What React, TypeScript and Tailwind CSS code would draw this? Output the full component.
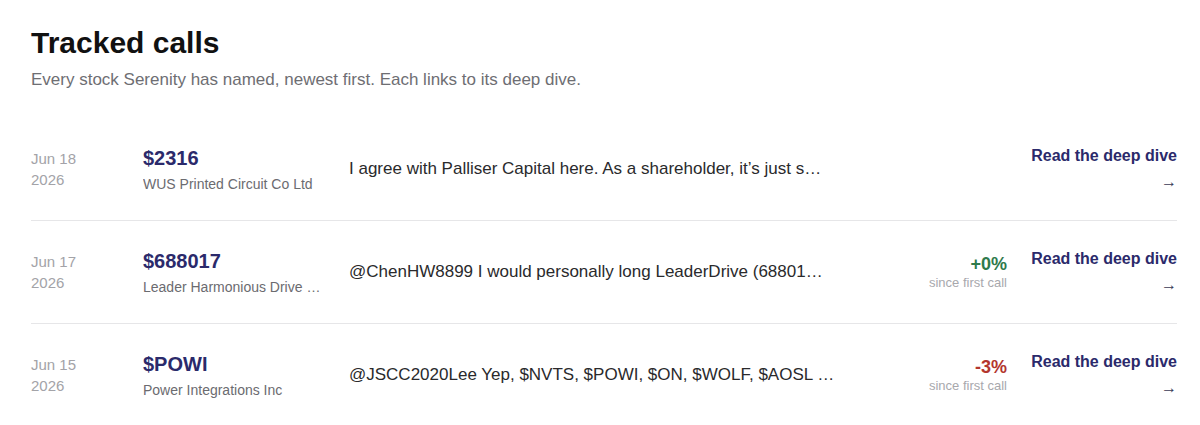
const CALLS = [
  {
    date: "Jun 18",
    year: "2026",
    ticker: "$2316",
    company: "WUS Printed Circuit Co Ltd",
    quote: "I agree with Palliser Capital here. As a shareholder, it’s just s…",
    change: null as number | null,
  },
  {
    date: "Jun 17",
    year: "2026",
    ticker: "$688017",
    company: "Leader Harmonious Drive Systems Co Ltd",
    quote: "@ChenHW8899 I would personally long LeaderDrive (68801…",
    change: 0,
  },
  {
    date: "Jun 15",
    year: "2026",
    ticker: "$POWI",
    company: "Power Integrations Inc",
    quote: "@JSCC2020Lee Yep, $NVTS, $POWI, $ON, $WOLF, $AOSL …",
    change: -3,
  },
];

function Change({ value }: { value: number | null }) {
  if (value === null) return <div />;
  const up = value >= 0;
  return (
    <div className="text-right">
      <div className={`text-[18px] font-bold leading-[22px] ${up ? "text-[#2f7a4c]" : "text-[#b3362e]"}`}>
        {up ? "+" : ""}
        {value}%
      </div>
      <div className="whitespace-nowrap text-[13px] leading-[16px] text-[#a8a8ad]">since first call</div>
    </div>
  );
}

export default function App() {
  return (
    <div className="min-h-screen bg-white pl-[31px] pr-[23px] pt-[25px] font-['Liberation_Sans',Arial,sans-serif]">
      <h1 className="text-[30px] font-bold leading-[36px] text-[#111111]">Tracked calls</h1>
      <p className="mt-[7px] text-[17px] leading-[24px] text-[#6e6e73]">
        Every stock Serenity has named, newest first. Each links to its deep dive.
      </p>

      <div className="mt-[26px] divide-y divide-[#e6e6e8]">
        {CALLS.map((c) => (
          <div
            key={c.ticker}
            className="grid grid-cols-[88px_182px_minmax(0,1fr)_136px_146px] items-center gap-x-6 py-[25px]"
          >
            <div className="text-[15px] leading-[21px] text-[#a3a3a8]">
              <div>{c.date}</div>
              <div>{c.year}</div>
            </div>
            <div className="min-w-0">
              <div className="text-[20px] font-bold leading-[28px] text-[#2b2a6b]">{c.ticker}</div>
              <div className="mt-[2px] truncate text-[14px] leading-[20px] text-[#6b6b70]">{c.company}</div>
            </div>
            <div className="truncate text-[17px] leading-[24px] text-[#2a2a2c]">{c.quote}</div>
            <Change value={c.change} />
            <a href="#" className="block whitespace-nowrap text-right text-[#2b2a6b]">
              <span className="block text-[16px] font-bold leading-[26px]">Read the deep dive</span>
              <span className="block text-[16px] leading-[26px] text-[#3a3a55]">→</span>
            </a>
          </div>
        ))}
      </div>
    </div>
  );
}
